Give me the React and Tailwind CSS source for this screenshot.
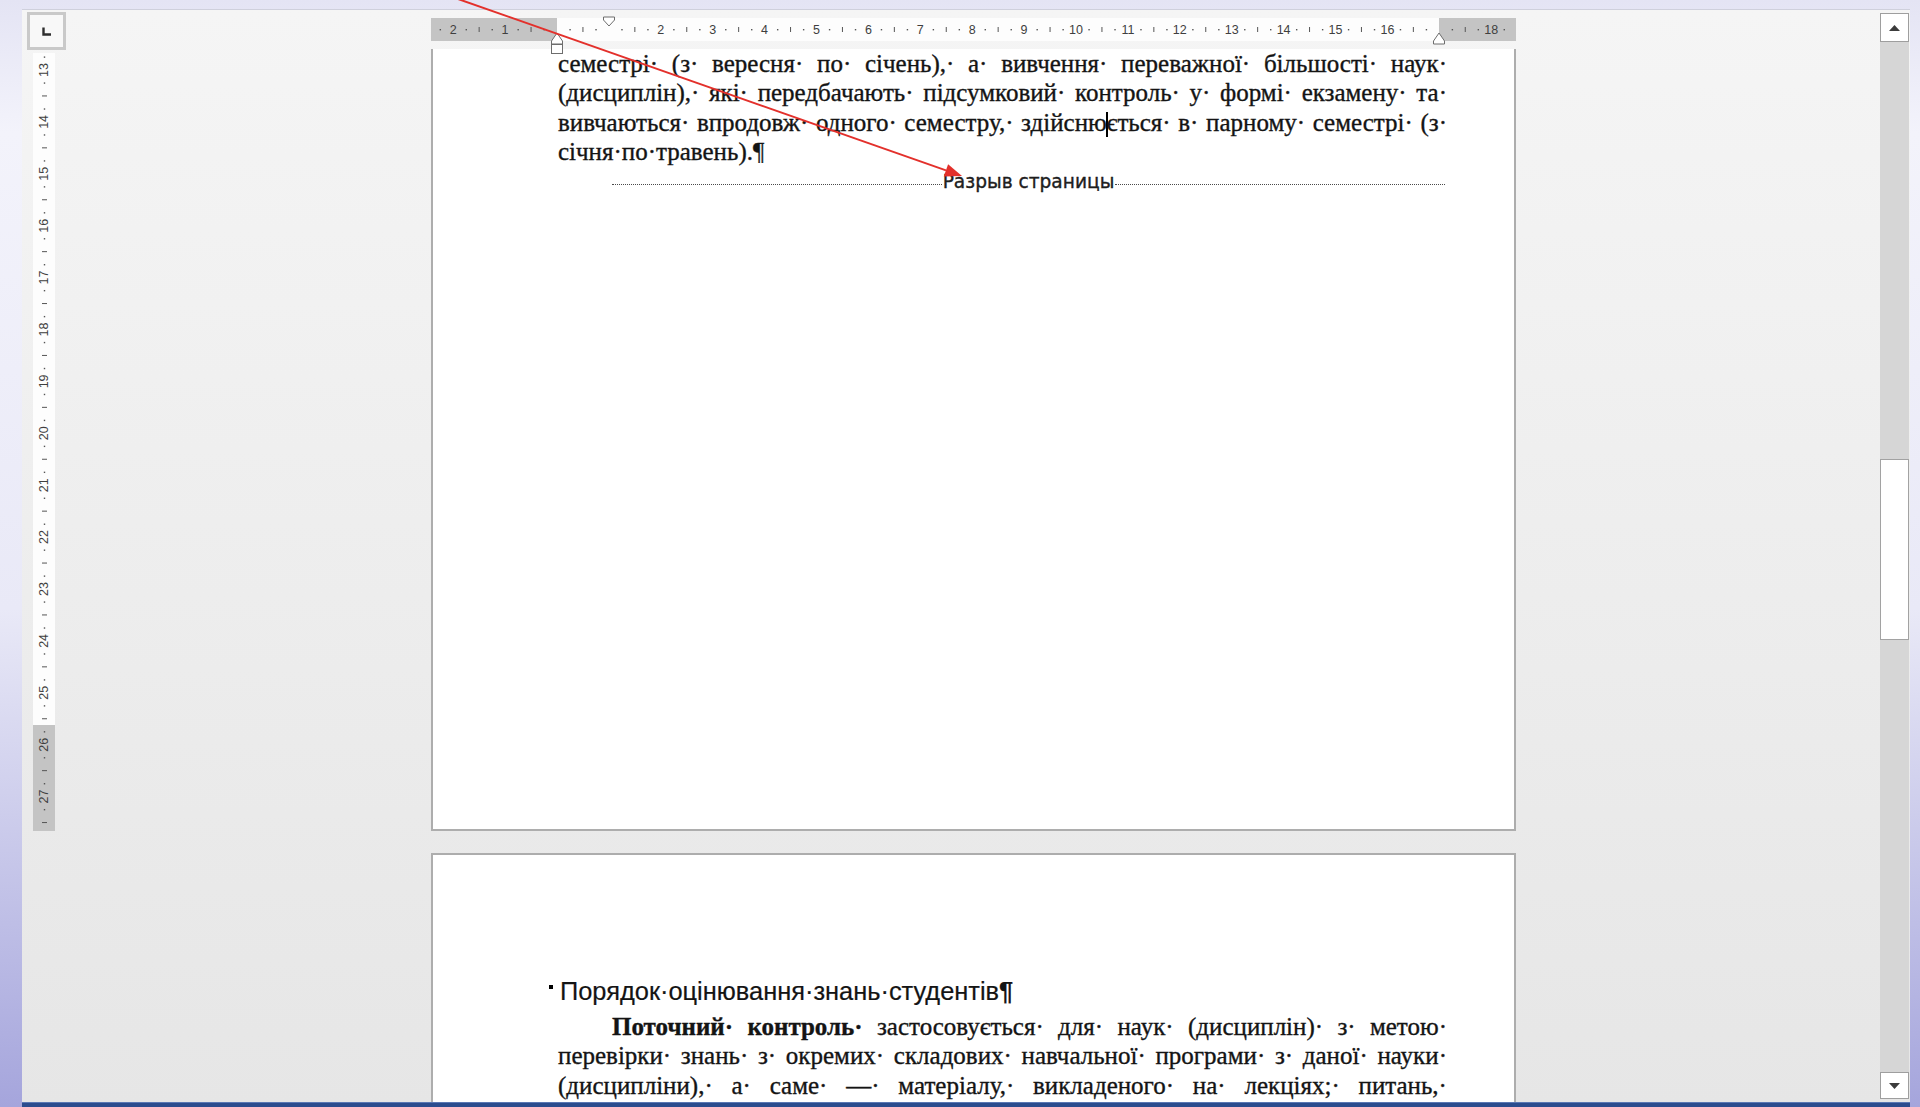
import React from "react";

const CM = 51.9;

// Horizontal ruler: grey margins, white text area, ticks every quarter centimetre
function HRuler() {
  const W = 1085;
  const zero = 126;
  const marks = [];
  for (let q = -10; q <= 76; q++) {
    const x = zero + (q * CM) / 4;
    if (x < 4 || x > W - 4) continue;
    const r = ((q % 4) + 4) % 4;
    if (r === 0) {
      const n = q / 4;
      if (n === 0 || n === 1 || n === 17) continue;
      marks.push(
        <text
          key={q}
          x={x}
          y={16}
          textAnchor="middle"
          fontSize="12.5"
          fill="#3f3f3f"
          fontFamily="'Liberation Sans', Arial, sans-serif"
        >
          {Math.abs(n)}
        </text>
      );
    } else if (r === 2) {
      marks.push(<line key={q} x1={x} x2={x} y1={9} y2={14} stroke="#555" strokeWidth="1" />);
    } else {
      marks.push(<rect key={q} x={x - 0.6} y={11} width={1.4} height={1.4} fill="#555" />);
    }
  }
  return (
    <div className="relative flex h-[23px] w-[1085px] mt-[8px]">
      <div className="w-[126px] bg-[#c4c4c4]" />
      <div className="w-[882px] bg-[#fdfdfd]" />
      <div className="flex-1 bg-[#c4c4c4]" />
      <svg className="absolute inset-0" width="1085" height="23">
        {marks}
      </svg>
      {/* indent markers */}
      <svg className="absolute left-0 top-[-2px] overflow-visible" width="1085" height="42">
        {/* first line indent */}
        <polygon points="172.5,1 183.5,1 183.5,4 178,10 172.5,4" fill="#fff" stroke="#6d6d6d" strokeWidth="1" />
        {/* hanging indent */}
        <polygon points="120.5,25 126,17 131.5,25 131.5,28 120.5,28" fill="#fff" stroke="#6d6d6d" strokeWidth="1" />
        {/* left indent */}
        <rect x="120.5" y="28.5" width="11" height="9" fill="#fff" stroke="#6d6d6d" strokeWidth="1" />
        {/* right indent */}
        <polygon points="1002.5,25 1008,17 1013.5,25 1013.5,28 1002.5,28" fill="#fff" stroke="#6d6d6d" strokeWidth="1" />
      </svg>
    </div>
  );
}

// Vertical ruler, numbers read bottom to top
function VRuler() {
  const H = 778;
  const marks = [];
  for (let q = 44; q <= 116; q++) {
    const y = 17 + (q / 4 - 13) * CM;
    if (y < 3 || y > H - 3) continue;
    const r = q % 4;
    if (r === 0) {
      marks.push(
        <text
          key={q}
          x={11}
          y={y}
          textAnchor="middle"
          dominantBaseline="central"
          fontSize="12.5"
          fill="#3f3f3f"
          fontFamily="'Liberation Sans', Arial, sans-serif"
          transform={`rotate(-90 11 ${y})`}
        >
          {q / 4}
        </text>
      );
    } else if (r === 2) {
      marks.push(<line key={q} x1={9} x2={14} y1={y} y2={y} stroke="#555" strokeWidth="1" />);
    } else {
      marks.push(<rect key={q} x={10.8} y={y - 0.6} width={1.4} height={1.4} fill="#555" />);
    }
  }
  return (
    <div className="relative mt-[4px] ml-[11px] w-[22px] h-[778px] flex flex-col">
      <div className="h-[672px] bg-[#fdfdfd]" />
      <div className="flex-1 bg-[#c4c4c4]" />
      <svg className="absolute inset-0" width="22" height="778">
        {marks}
      </svg>
    </div>
  );
}

// A justified line of text with Word's space marks after each word
function JLine({ words, className = "" }) {
  return (
    <div className={"flex justify-between h-[29.4px] " + className}>
      {words.map((w, i) => (
        <span key={i} className="whitespace-pre">
          {w}
        </span>
      ))}
    </div>
  );
}

const dotted = (s) => s.split(" ").map((w) => w + "·");

function PageBreak() {
  return (
    <div className="flex items-center h-[30px] pl-[54px] pr-[2px]">
      <div className="flex-1 border-t border-dotted border-[#4a4a4a] translate-y-[3px]" />
      <span className="px-[1px] font-['DejaVu_Sans',sans-serif] text-[18.6px] leading-[30px] text-[#222]">
        Разрыв страницы
      </span>
      <div className="flex-1 border-t border-dotted border-[#4a4a4a] translate-y-[3px]" />
    </div>
  );
}

function Scrollbar() {
  return (
    <div className="w-[29px] shrink-0 flex flex-col pt-[3px] pb-[3px]">
      <div className="flex-1 flex flex-col bg-[#d6d6d6]">
        <div className="h-[29px] bg-white border border-[#9e9e9e] flex items-center justify-center">
          <svg width="11" height="6">
            <polygon points="0,6 5.5,0 11,6" fill="#3c3c3c" />
          </svg>
        </div>
        <div className="h-[417px]" />
        <div className="h-[181px] bg-white border border-[#a2a2a2]" />
        <div className="flex-1" />
        <div className="h-[27px] bg-white border border-[#9e9e9e] flex items-center justify-center">
          <svg width="11" height="6">
            <polygon points="0,0 5.5,6 11,0" fill="#3c3c3c" />
          </svg>
        </div>
      </div>
    </div>
  );
}

export default function App() {
  const serif =
    "font-['Liberation_Serif',serif] text-[25px] leading-[29.4px] text-[#141414] [-webkit-text-stroke:0.35px_#141414]";
  return (
    <div className="relative w-[1920px] h-[1107px] overflow-hidden flex pt-[9px] pl-[22px] pr-[10px] bg-[linear-gradient(180deg,#e4e4f4_0%,#f3f3fb_12%,#e9e9f7_55%,#a5a5dc_100%)]">
      <div className="flex-1 flex flex-col border-t border-[#cfd0dc] bg-[linear-gradient(180deg,#f5f5f5,#e6e6e6)]">
        <div className="flex-1 min-h-0 flex">
          <div className="w-[1858px] shrink-0 flex flex-col">
            {/* ruler row */}
            <div className="h-[39px] shrink-0 flex">
              <div className="w-[409px] shrink-0">
                <div className="ml-[5px] mt-[2px] w-[39px] h-[38px] border-[3px] border-[#c9c9c9] bg-[#f8f8f8] flex items-center justify-center">
                  <svg width="11" height="11">
                    <path d="M2.5 1.5 V8.5 H10" stroke="#2e2e2e" strokeWidth="2.4" fill="none" />
                  </svg>
                </div>
              </div>
              <HRuler />
            </div>
            {/* document area */}
            <div className="flex-1 min-h-0 flex overflow-hidden">
              <div className="w-[409px] shrink-0">
                <VRuler />
              </div>
              <div className="w-[1085px] shrink-0 flex flex-col">
                <div className="h-[782px] shrink-0 bg-white border-x-2 border-b-2 border-[#adadad]">
                  <div className={"ml-[125px] w-[889px] " + serif}>
                    <JLine words={dotted("семестрі (з вересня по січень), а вивчення переважної більшості наук")} />
                    <JLine words={dotted("(дисциплін), які передбачають підсумковий контроль у формі екзамену та")} />
                    <JLine
                      words={[
                        ...dotted("вивчаються впродовж одного семестру,"),
                        <>
                          здійсню
                          <span className="inline-block w-[2px] h-[25px] -mx-[1px] bg-black align-[-6px]" />
                          ється·
                        </>,
                        ...dotted("в парному семестрі (з"),
                      ]}
                    />
                    <div className="h-[29.4px]">січня·по·травень).¶</div>
                    <PageBreak />
                  </div>
                </div>
                <div className="mt-[22px] h-[400px] shrink-0 bg-white border-x-2 border-t-2 border-[#adadad] pt-[121px]">
                  <div className="flex items-start ml-[116px] h-[30px]">
                    <span className="mt-[9px] w-[4px] h-[4px] bg-black" />
                    <span className="ml-[7px] font-['Liberation_Sans',sans-serif] text-[25.4px] leading-[30px] text-[#141414] [-webkit-text-stroke:0.2px_#141414]">
                      Порядок·оцінювання·знань·студентів<b>¶</b>
                    </span>
                  </div>
                  <div className={"mt-[6px] ml-[125px] w-[889px] " + serif}>
                    <JLine
                      className="pl-[54px]"
                      words={[
                        <b>Поточний·</b>,
                        <b>контроль·</b>,
                        ...dotted("застосовується для наук (дисциплін) з метою"),
                      ]}
                    />
                    <JLine words={dotted("перевірки знань з окремих складових навчальної програми з даної науки")} />
                    <JLine words={dotted("(дисципліни), а саме — матеріалу, викладеного на лекціях; питань,")} />
                  </div>
                </div>
              </div>
            </div>
          </div>
          <Scrollbar />
        </div>
        <div className="h-[5px] shrink-0 bg-[#2b4c8e] border-t border-[#5a78b4]" />
      </div>
      {/* red pointer arrow */}
      <svg className="absolute inset-0 pointer-events-none" width="1920" height="1107">
        <line x1="458" y1="-1" x2="946" y2="170.4" stroke="#e3302b" strokeWidth="2" />
        <polygon points="962,176 943.8,176.5 948.1,164.3" fill="#e3302b" />
      </svg>
    </div>
  );
}
